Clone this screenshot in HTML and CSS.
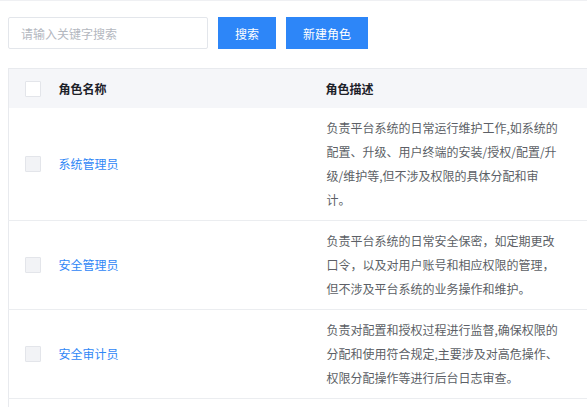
FILE: index.html
```html
<!DOCTYPE html>
<html lang="zh-CN">
<head>
<meta charset="utf-8">
<title>角色管理</title>
<link rel="stylesheet" href="styles.css">
</head>
<body>
<div class="page">
  <div class="toolbar">
    <input class="search-input" type="text" placeholder="请输入关键字搜索">
    <button class="btn">搜索</button>
    <button class="btn">新建角色</button>
  </div>
  <table class="role-table">
    <colgroup>
      <col class="col-check">
      <col class="col-name">
      <col class="col-desc">
      <col class="col-more">
    </colgroup>
    <thead>
      <tr>
        <th class="cell-check"><span class="checkbox checkbox-head"></span></th>
        <th>角色名称</th>
        <th>角色描述</th>
        <th></th>
      </tr>
    </thead>
    <tbody>
      <tr>
        <td class="cell-check"><span class="checkbox"></span></td>
        <td><a class="role-link">系统管理员</a></td>
        <td class="desc">负责平台系统的日常运行维护工作,如系统的配置、升级、用户终端的安装/授权/配置/升级/维护等,但不涉及权限的具体分配和审计。</td>
        <td></td>
      </tr>
      <tr>
        <td class="cell-check"><span class="checkbox"></span></td>
        <td><a class="role-link">安全管理员</a></td>
        <td class="desc">负责平台系统的日常安全保密，如定期更改口令，以及对用户账号和相应权限的管理，但不涉及平台系统的业务操作和维护。</td>
        <td></td>
      </tr>
      <tr>
        <td class="cell-check"><span class="checkbox"></span></td>
        <td><a class="role-link">安全审计员</a></td>
        <td class="desc">负责对配置和授权过程进行监督,确保权限的分配和使用符合规定,主要涉及对高危操作、权限分配操作等进行后台日志审查。</td>
        <td></td>
      </tr>
      <tr>
        <td class="cell-check"><span class="checkbox"></span></td>
        <td><a class="role-link">&nbsp;</a></td>
        <td class="desc">&nbsp;</td>
        <td></td>
      </tr>
    </tbody>
  </table>
</div>
</body>
</html>
```
FILE: styles.css
```css
html, body {
  margin: 0;
  padding: 0;
  overflow: hidden;
  background: #ffffff;
}

body {
  font-family: "Noto Sans CJK SC", "Noto Sans", sans-serif;
  font-size: 12px;
  color: #606266;
}

.page {
  width: 587px;
  height: 407px;
  overflow: hidden;
  border-top: 1px solid #eff0f3;
  box-sizing: border-box;
  padding: 16px 0 0 8px;
}

.toolbar {
  display: flex;
  align-items: center;
  gap: 10px;
  height: 32px;
  margin-bottom: 19px;
}

.search-input {
  width: 200px;
  height: 32px;
  box-sizing: border-box;
  border: 1px solid #e3e6eb;
  border-radius: 2px;
  padding: 0 12px;
  font-family: inherit;
  font-size: 12px;
  color: #333;
  outline: none;
  margin: 0;
}

.search-input::placeholder {
  color: #b4b8bf;
}

.btn {
  height: 32px;
  padding: 0 17px;
  border: none;
  border-radius: 0;
  background: #2d86f8;
  color: #ffffff;
  font-family: inherit;
  font-size: 12px;
  margin: 0;
  cursor: pointer;
}

.role-table {
  border-collapse: collapse;
  table-layout: fixed;
  width: 800px;
  border-left: 1px solid #e8eaee;
}

.col-check { width: 34px; }
.col-name { width: 267px; }
.col-desc { width: 264px; }
.col-more { width: 235px; }

.role-table thead tr {
  background: #f5f6f9;
  border-top: 1px solid #e8eaee;
}

.role-table th {
  height: 39px;
  padding: 0 16px;
  text-align: left;
  font-weight: 700;
  color: #1d2129;
  font-size: 12px;
  vertical-align: middle;
}

.role-table td {
  padding: 8px 16px 8px 16px;
  vertical-align: middle;
  border-bottom: 1px solid #ebedf0;
}

.role-table .cell-check {
  padding: 0 0 0 16px;
  overflow: visible;
}

.role-table td.desc {
  line-height: 24px;
  color: #5c5f66;
  padding-left: 17px;
  padding-right: 13px;
}

.checkbox {
  display: block;
  width: 16px;
  height: 16px;
  box-sizing: border-box;
  border: 1px solid #e3e5ea;
  background: #f2f3f6;
  border-radius: 1px;
}

.checkbox-head {
  background: #ffffff;
}

.role-link {
  color: #2f87f6;
  text-decoration: none;
  line-height: 24px;
}
```
